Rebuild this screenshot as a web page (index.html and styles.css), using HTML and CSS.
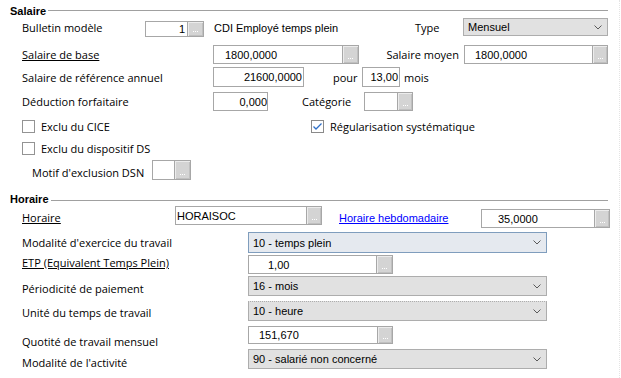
FILE: index.html
```html
<!DOCTYPE html>
<html lang="fr">
<head>
<meta charset="utf-8">
<title>Salaire</title>
<link rel="stylesheet" href="styles.css">
</head>
<body>
<div class="page">
  <div class="gh gh1"><span class="gt">Salaire</span><span class="gl"></span></div>

  <div class="row r1">
    <span class="lbl w123">Bulletin modèle</span>
    <span class="field top3 h16"><span class="inp right w43 pr2">1</span><span class="btn"><span class="dots"><i></i><i></i><i></i></span></span></span>
    <span class="val ml10">CDI Employé temps plein</span>
    <span class="grp">
      <span class="lbl w48">Type</span>
      <span class="sel w145"><span>Mensuel</span><svg class="chev" width="8" height="5" viewBox="0 0 8 5"><polyline points="0.5,0.5 4,4 7.5,0.5"/></svg></span>
    </span>
  </div>

  <div class="row r2">
    <span class="lbl w191 u">Salaire de base</span>
    <span class="field"><span class="inp w130 pl11">1800,0000</span><span class="btn"><span class="dots"><i></i><i></i><i></i></span></span></span>
    <span class="grp">
      <span class="lbl lblright">Salaire moyen</span>
      <span class="field"><span class="inp w129 pl10">1800,0000</span><span class="btn w15"><span class="dots"><i></i><i></i><i></i></span></span></span>
    </span>
  </div>

  <div class="row r3">
    <span class="lbl w191">Salaire de référence annuel</span>
    <span class="field"><span class="inp right w91 pr1">21600,0000</span></span>
    <span class="lbl ml29 w29">pour</span>
    <span class="field"><span class="inp right w38 pr1">13,00</span></span>
    <span class="lbl ml4">mois</span>
  </div>

  <div class="row r4">
    <span class="lbl w191">Déduction forfaitaire</span>
    <span class="field"><span class="inp right w55 pr0">0,000</span></span>
    <span class="lbl ml34 w62">Catégorie</span>
    <span class="field"><span class="inp w34"></span><span class="btn w15"><span class="dots"><i></i><i></i><i></i></span></span></span>
  </div>

  <div class="row r5">
    <span class="chk w289"><span class="cb"></span><span class="lbl">Exclu du CICE</span></span>
    <span class="chk"><span class="cb checked"><svg width="11" height="11" viewBox="0 0 11 11"><polyline points="1.5,5.5 4,8 9.5,2.5"/></svg></span><span class="lbl">Régularisation systématique</span></span>
  </div>

  <div class="row r6">
    <span class="chk"><span class="cb"></span><span class="lbl">Exclu du dispositif DS</span></span>
  </div>

  <div class="row r7">
    <span class="lbl ml10 w120 dn4">Motif d'exclusion DSN</span>
    <span class="field"><span class="inp w23"></span><span class="btn"><span class="dots"><i></i><i></i><i></i></span></span></span>
  </div>

  <div class="gh gh2"><span class="gt">Horaire</span><span class="gl"></span></div>

  <div class="row h1">
    <span class="lbl w153 u">Horaire</span>
    <span class="field top0 h19"><span class="inp w132 pl1">HORAISOC</span><span class="btn w15"><span class="dots"><i></i><i></i><i></i></span></span></span>
    <a class="link ml17 dn2" href="#">Horaire hebdomadaire</a>
    <span class="grp">
      <span class="field top3 h19"><span class="inp w114 pl16">35,0000</span><span class="btn w15"><span class="dots"><i></i><i></i><i></i></span></span></span>
    </span>
  </div>

  <div class="row h2">
    <span class="lbl w226">Modalité d'exercice du travail</span>
    <span class="sel focus w299"><span>10 - temps plein</span><svg class="chev" width="8" height="5" viewBox="0 0 8 5"><polyline points="0.5,0.5 4,4 7.5,0.5"/></svg></span>
  </div>

  <div class="row h3">
    <span class="lbl w226 u up4">ETP (Equivalent Temps Plein)</span>
    <span class="field"><span class="inp w129 pl19">1,00</span><span class="btn"><span class="dots"><i></i><i></i><i></i></span></span></span>
  </div>

  <div class="row h4">
    <span class="lbl w226 dn4">Périodicité de paiement</span>
    <span class="sel w299"><span>16 - mois</span><svg class="chev" width="8" height="5" viewBox="0 0 8 5"><polyline points="0.5,0.5 4,4 7.5,0.5"/></svg></span>
  </div>

  <div class="row h5">
    <span class="lbl w226 dn2">Unité du temps de travail</span>
    <span class="sel dotted w299"><span>10 - heure</span><svg class="chev" width="8" height="5" viewBox="0 0 8 5"><polyline points="0.5,0.5 4,4 7.5,0.5"/></svg></span>
  </div>

  <div class="row h6">
    <span class="lbl w226 dn12">Quotité de travail mensuel</span>
    <span class="field"><span class="inp w130 pl10">151,670</span><span class="btn w15"><span class="dots"><i></i><i></i><i></i></span></span></span>
  </div>

  <div class="row h7">
    <span class="lbl w226 dn6">Modalité de l'activité</span>
    <span class="sel w299"><span>90 - salarié non concerné</span><svg class="chev" width="8" height="5" viewBox="0 0 8 5"><polyline points="0.5,0.5 4,4 7.5,0.5"/></svg></span>
  </div>
</div>
</body>
</html>
```

FILE: styles.css
```css
* { box-sizing: border-box; }
html, body { margin: 0; padding: 0; }
body {
  width: 621px;
  height: 378px;
  overflow: hidden;
  background: #fff;
  color: #000;
  font-family: "Open Sans", "Noto Sans", sans-serif;
  font-size: 11px;
}
.page {
  display: flex;
  flex-direction: column;
  padding-right: 11px;
  height: 378px;
  border-right: 1px dotted #e4e4e4;
  width: 620px;
}

/* group headers */
.gh { display: flex; align-items: flex-start; height: 18px; flex: none; }
.gt {
  font-family: "Liberation Sans", Arial, sans-serif;
  font-weight: bold;
  font-size: 11px;
  line-height: 18px;
  margin: 2px 0 0 10px;
}
.gl { flex: 1; border-top: 1px solid #a0a0a0; margin-left: 2px; }
.gh1 .gl { margin-top: 10px; }
.gh2 { margin-top: 8px; }
.gh2 .gl { margin-top: 12px; }

/* rows */
.row { display: flex; align-items: center; padding-left: 22px; flex: none; }
.r1 { height: 19px; }
.r2 { height: 19px; margin-top: 8px; }
.r3 { height: 20px; margin-top: 3px; }
.r4 { height: 19px; margin-top: 5px; }
.r5 { height: 13px; margin-top: 9px; }
.r6 { height: 13px; margin-top: 9px; }
.r7 { height: 20px; margin-top: 5px; }
.h1 { height: 22px; margin-right: -2px; }
.h2 { height: 21px; margin-top: 4px; }
.h3 { height: 19px; margin-top: 2px; }
.h4 { height: 20px; margin-top: 2px; }
.h5 { height: 20px; margin-top: 5px; }
.h6 { height: 18px; margin-top: 5px; }
.h7 { height: 20px; margin-top: 5px; }

.lbl { white-space: nowrap; line-height: 15px; flex: none; }
.u { text-decoration: underline; }
.val {
  font-family: "Liberation Sans", Arial, sans-serif;
  font-size: 11px;
  white-space: nowrap;
}
.grp { display: flex; align-items: center; margin-left: auto; align-self: stretch; }
.lblright { text-align: right; margin-right: 5px; }

.link {
  color: #0000ff;
  text-decoration: underline;
  white-space: nowrap;
  line-height: 15px;
  font-family: "Liberation Sans", Arial, sans-serif;
  font-size: 11px;
}

/* text fields */
.field { display: flex; align-self: stretch; flex: none; }
.field.top3 { align-self: flex-start; margin-top: 3px; }
.field.top0 { align-self: flex-start; }
.field.h16 { height: 16px; }
.field.h19 { height: 19px; }
.inp {
  display: flex;
  align-items: center;
  border: 1px solid #a7a7a7;
  background: #fff;
  font-family: "Liberation Sans", Arial, sans-serif;
  font-size: 11px;
  white-space: nowrap;
  overflow: hidden;
}
.inp.right { justify-content: flex-end; }
.btn {
  width: 16px;
  flex: none;
  border: 1px solid #a7a7a7;
  border-left: none;
  background: #d4d4d4;
  box-shadow: inset 1px 1px 0 #ececec, inset -1px -1px 0 #c0c0c0;
  display: flex;
  align-items: flex-end;
  justify-content: center;
  overflow: hidden;
  padding-bottom: 4px;
}
.btn.w15 { width: 15px; }
.dots { display: flex; gap: 1px; }
.dots i { display: block; width: 1px; height: 1px; background: #ffffff; }

/* selects */
.sel {
  display: flex;
  align-items: center;
  justify-content: space-between;
  align-self: stretch;
  flex: none;
  background: #e1e1e1;
  border: 1px solid #adadad;
  padding: 0 5px 0 4px;
  font-family: "Liberation Sans", Arial, sans-serif;
  font-size: 11px;
  white-space: nowrap;
}
.sel.focus { background: #e5e9ef; border-color: #7f9dbd; }
.sel.dotted { border-top: 1px dotted #adadad; }
.r1 .sel { align-self: flex-start; height: 18px; }
.chev { flex: none; }
.chev polyline { fill: none; stroke: #5a5a5a; stroke-width: 1; }

/* checkboxes */
.chk { display: flex; align-items: center; gap: 6px; flex: none; }
.cb {
  width: 13px;
  height: 13px;
  border: 1px solid #939393;
  background: #fff;
  display: flex;
  align-items: center;
  justify-content: center;
  flex: none;
}
.cb.checked { border-color: #8a8a8a; }
.cb svg polyline { fill: none; stroke: #2f6fc7; stroke-width: 1.3; }

/* widths */
.w15 { width: 15px; }
.w23 { width: 23px; }
.w29 { width: 29px; }
.w34 { width: 34px; }
.w38 { width: 38px; }
.w43 { width: 43px; }
.w48 { width: 48px; }
.w55 { width: 55px; }
.w62 { width: 62px; }
.w91 { width: 91px; }
.w114 { width: 114px; }
.w120 { width: 120px; }
.w123 { width: 123px; }
.w129 { width: 129px; }
.w130 { width: 130px; }
.w132 { width: 132px; }
.w145 { width: 145px; }
.w153 { width: 153px; }
.w191 { width: 191px; }
.w226 { width: 226px; }
.w289 { width: 289px; }
.w299 { width: 299px; }

/* spacing */
.ml4 { margin-left: 4px; }
.ml10 { margin-left: 10px; }
.ml17 { margin-left: 17px; }
.ml29 { margin-left: 29px; }
.ml34 { margin-left: 34px; }
.pl1 { padding-left: 1px; }
.pl10 { padding-left: 10px; }
.pl11 { padding-left: 11px; }
.pl16 { padding-left: 16px; }
.pl19 { padding-left: 19px; }
.pr0 { padding-right: 0; }
.pr1 { padding-right: 1px; }
.pr2 { padding-right: 2px; }
.dn2 { padding-top: 2px; }
.dn4 { padding-top: 4px; }
.dn6 { padding-top: 6px; }
.dn12 { padding-top: 12px; }
.up4 { padding-bottom: 4px; }
```
